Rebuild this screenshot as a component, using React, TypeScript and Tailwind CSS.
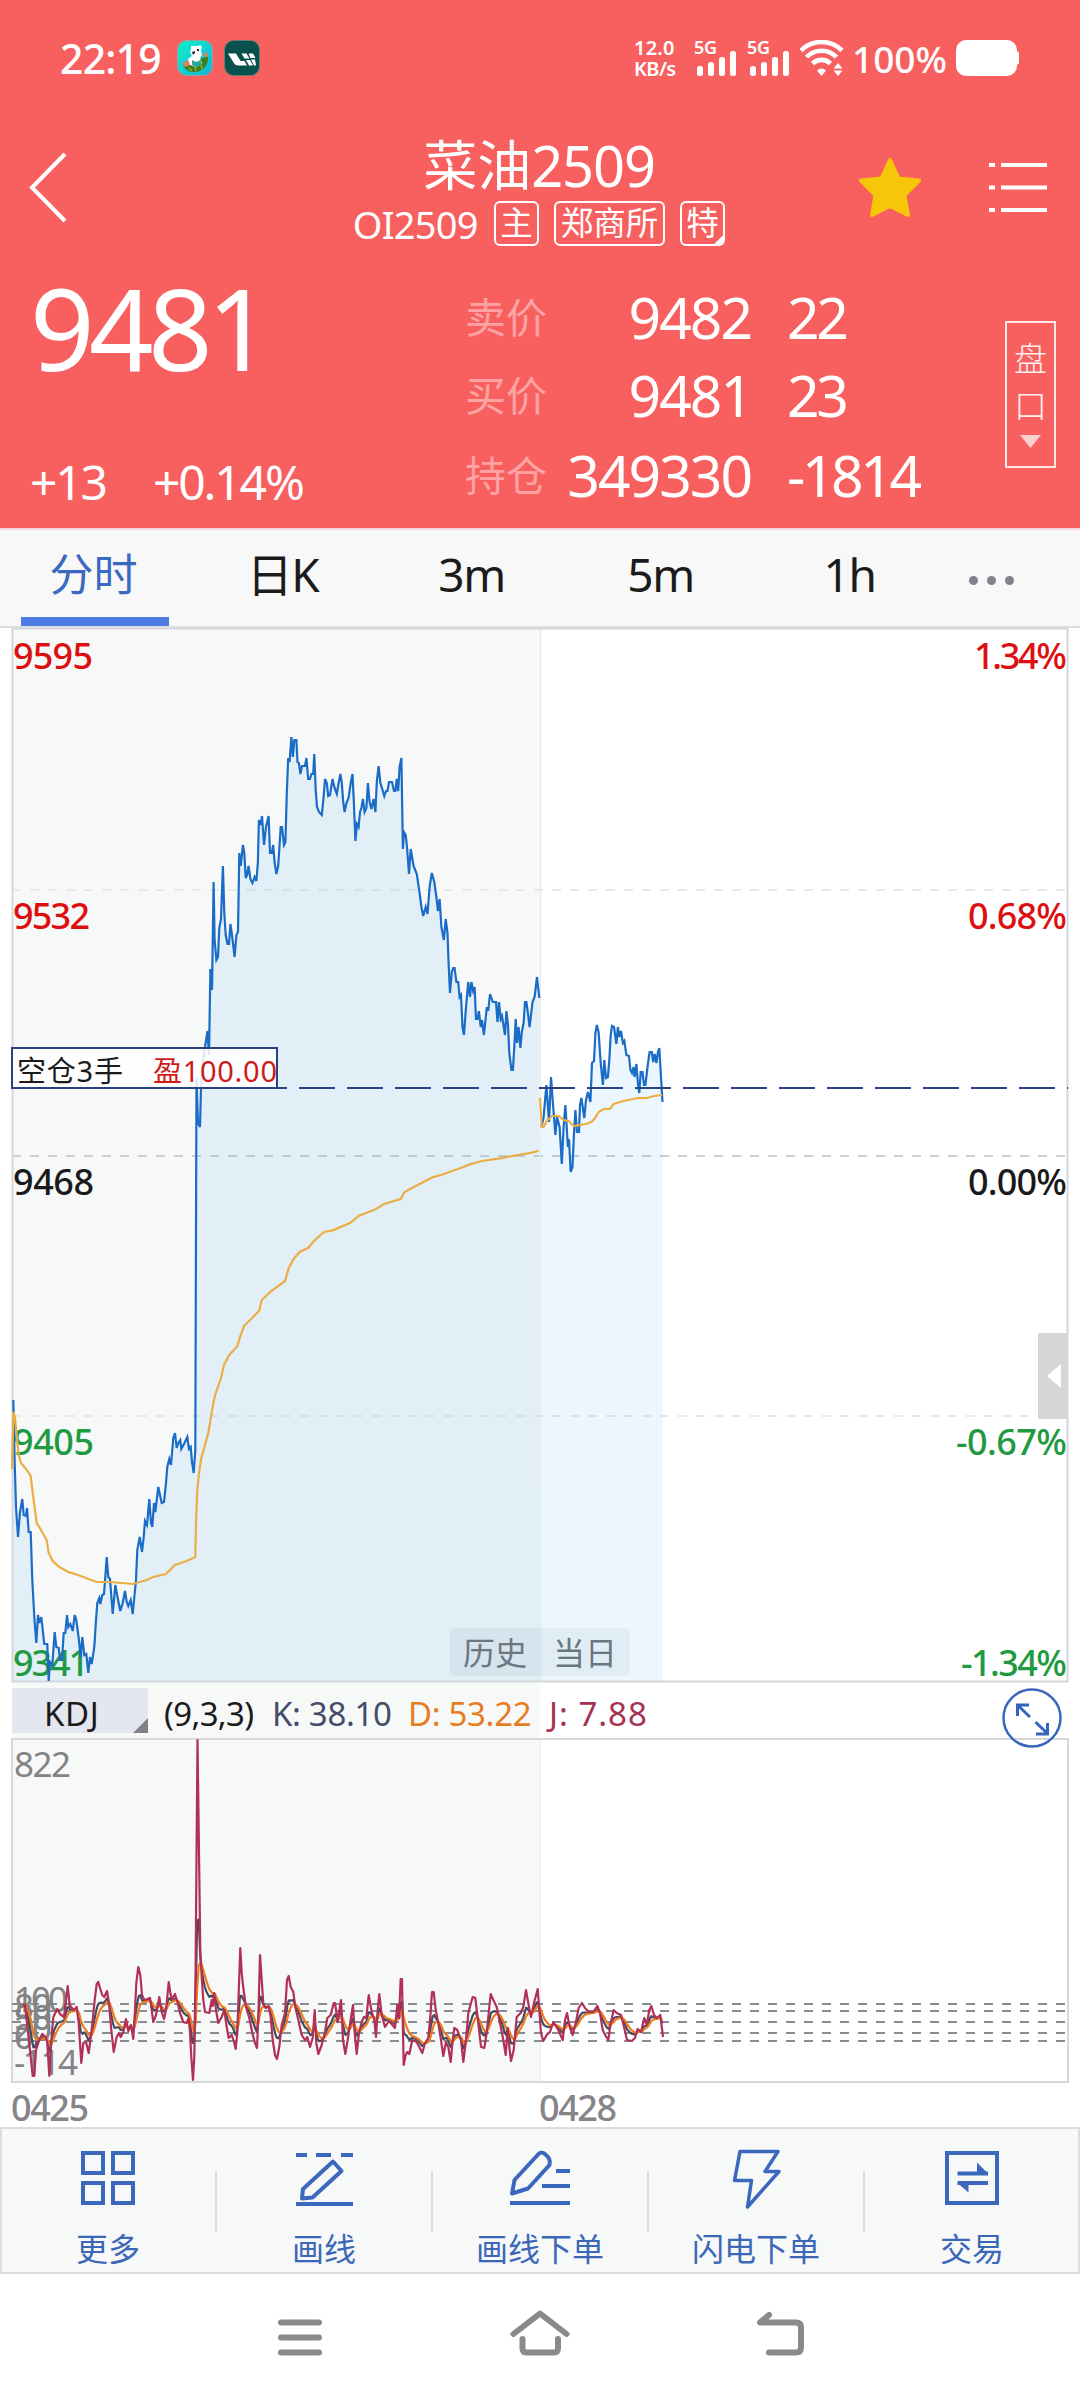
import React from "react";

const HISTORY_PRICE =
  "13.3,1400 14.7,1463 16,1507 18,1537 20,1512 22.3,1499 23.7,1515 26,1516 27,1508 28.7,1532 30.7,1532 32.3,1580 34.3,1617 36.3,1643 38,1615 39.3,1623 41.3,1617 44.3,1644 47.3,1644 48.7,1681 50,1662 52.3,1665 54.7,1632 56.3,1647 58.7,1648 60,1660 62,1660 63.7,1633 65.3,1633 67,1615 68.3,1627 70.3,1624 72.7,1631 74.7,1615 76.3,1620 78.7,1638 80.7,1657 82.3,1637 84.3,1655 86.3,1654 88.3,1673 90,1657 91.7,1664 94.3,1647 96,1620 97.3,1603 99.3,1598 100.3,1604 102.3,1595 104,1594 105.3,1577 106.7,1557 108.3,1577 110,1579 112.7,1614 115.3,1585 117.7,1598 120.3,1611 122.7,1603 125,1591 126.7,1602 128.3,1606 130.7,1600 132.7,1614 134.7,1593 136,1580 137.3,1550 139.7,1537 142,1552 143.7,1537 145,1521 147,1525 149.3,1499 151,1523 152.3,1527 154,1503 155.3,1512 158.3,1487 161.7,1503 164,1502 166,1483 167.3,1467 169.3,1459 171,1465 173.3,1438 175,1433 176.7,1448 178.3,1443 180.3,1440 181.3,1449 184,1444 187.3,1437 189,1449 190.7,1447 192,1462 193.7,1473 195.3,1450 196.5,1077 198,1123 200,1127 201,1088 203,1060 207.5,1031 209,1055 210.4,969 212,990 213.6,882 214.6,940 216.4,960 218,957 219.3,928 221,919 222.9,866 224.3,913 225.7,935 227.5,944 229,944 230.4,924 232,935 234.6,957 236.4,935 238,932 239.3,853 240.7,866 242.9,845 244.3,853 245.7,878 247,875 248.6,866 250.4,879 252.5,883 254.6,877 256.4,881 257.9,862 258.9,820 260.7,825 262,816 264,845 266,827 268.6,816 270,853 271.8,853 273.2,845 274.6,862 276.4,874 278.2,866 280.7,827 282,827 284,845 285.4,842 286.8,793 288.2,758 289.6,762 291.4,737 292.9,757 294.3,740 296.4,740 297.5,762 298.9,763 300.4,774 302,766 305,766 306.4,758 308.2,779 310,779 311.4,774 313.2,774 314.3,754 315.7,790 317,807 319,812 321.8,815 323.6,797 325,779 326.8,783 328.2,796 330,795 332.5,779 334.6,788 336.8,794 338.6,783 340.4,774 341.8,783 343.2,802 344.6,812 346.4,803 348.6,798 350.7,783 352.5,774 353.9,803 355.4,841 357,824 358.6,827 360,812 361.4,808 362.9,799 364.6,812 366.4,808 367.9,783 369.6,802 371.4,809 373.6,799 375.4,812 376.8,782 378.6,766 380.4,783 382,788 384.3,796 386,791 387.5,791 389,782 392,782 394,791 395.4,791 396.8,779 398.2,791 399.6,767 401.4,758 402.9,849 404,832 405.7,835 407,847 409,874 410.7,849 413.6,866 416.8,874 419.6,893 421.4,907 423.2,916 425.7,907 427.5,914 429.6,887 431.8,873 434.3,882 436.4,897 437.9,911 439.6,899 441.4,927 443.9,940 445.7,919 447.5,933 448.6,963 450,993 451.8,972 453.2,968 454.6,968 456.4,982 458.2,982 459.6,997 461,995 462.5,1027 464,1035 466,1007 468.2,982 470,997 471.4,982 473.2,991 474.6,987 476,1019 477.5,1019 478.9,1011 480.7,1027 482,1020 483.9,1035 485.7,1018 486.8,1007 488.2,1011 490,994 492.9,1002 496,1002 497.5,1022 499,1002 500.7,1019 502,1016 505,1035 506.4,1011 508,1025 509.3,1053 511.4,1070 512.9,1070 514.3,1047 515.7,1019 517,1043 518.6,1027 520.4,1048 521.8,1032 523.6,1023 525,1002 526.4,1002 527.9,1013 529.6,1027 532.5,1002 534.6,997 537,977 539.3,998";

const TODAY_PRICE =
  "541.4,1127 543.5,1118 546.4,1085 549,1122 551,1077 552.9,1103 555.4,1135 557,1117 559.6,1127 561.8,1164 563.6,1127 565.4,1105 567.9,1147 569,1139 570.7,1172 572.5,1167 574,1133 575.4,1110 577,1132 579,1132 580,1105 581.4,1098 584.3,1118 586,1100 587.9,1092 590.4,1102 592,1063 594,1061 595.4,1033 596.8,1025 598.6,1032 600.7,1063 602.9,1085 604.3,1060 606,1078 607.9,1077 609.3,1060 610.7,1035 612,1026 614,1027 616.4,1044 617.9,1027 619.3,1037 621,1031 622.9,1043 624.3,1041 626.4,1055 629,1056 630.4,1070 632,1073 633.6,1067 634.6,1077 636.4,1064 637.9,1083 639.3,1093 640.7,1072 642.5,1072 644,1085 645.4,1085 647.5,1067 649.6,1052 651.8,1052 653.2,1062 654.6,1054 656.4,1063 657.9,1052 659.3,1048 661,1077 662.5,1102";

const HISTORY_AVG =
  "12,1469 13.3,1412 15,1417 16.7,1437 18.7,1455 21,1463 26,1469 30.7,1476 32.7,1493 35,1510 36.7,1523 41,1530 46.7,1540 48.7,1553 52.7,1561 59.3,1567 68.3,1572 78.3,1575 88.3,1579 96.7,1582 110,1582 133,1584 146.7,1580 153,1577 165.7,1574 175,1565 186.7,1561 195.3,1557 196,1523 197.3,1490 199,1473 201.3,1458 208.3,1433 213.3,1403 215.4,1394 220.7,1379 224,1365 229.3,1355 237.5,1346 240,1337 244,1326 259,1311 261.8,1300 270.7,1291.5 285,1281 288.6,1268.5 293.6,1259 300,1251.7 308,1248 314,1241 324,1232 332,1230.6 350,1223 359,1215.7 375,1209.6 384,1204 400.7,1199 404.6,1192 419.6,1184 432,1177.5 441,1175 460.7,1168 469.6,1164.4 482,1161 500,1158.3 517.9,1155 532,1152.6 538.6,1150.7";

const TODAY_AVG =
  "540,1098 541.8,1127 543.6,1127 546.8,1121 552,1116 559,1116 563.6,1120 568.6,1121 573.6,1126 586,1124 591.4,1122 595,1118 598.6,1112 604,1109 610,1109 613.6,1104 623.6,1101 638,1098 647,1098 654,1096 662,1095";

const J_LINE =
  "22.7,2004 25,2005 27.3,2027 30,2050 32.7,2076 34.3,2076 36,2050 39.3,2040 42.3,2034 45.7,2037 47.3,2043 49.3,2076 51.3,2040 53.3,2017 57.3,2009 60,2014 64,2017 65.7,2003 67.7,1986 69.7,2005 73.3,2010 76.7,2007 78.7,2023 80,2043 81.3,2063 83.3,2043 86,2042 88.7,2053 90.7,2038 92.7,2020 94.7,2000 96.7,1984 98.3,1982 100,1988 102.3,1995 104.3,1997 107,1991 109,2003 111,2027 113.7,2052 116.7,2037 119,2033 120.7,2037 123.3,2032 126,2019 128.3,2031 131,2025 133.3,2039 135,2010 136.3,1983 138.3,1967 140.3,1975 142,1995 144.3,2000 147.3,1999 150,1998 151.7,2010 153.3,2022 156,2015 159.3,1997 161.7,2012 164,2019 166,2010 167.3,1997 168.7,1982 170.7,1995 172.3,1999 175,1994 177.7,2003 180,2013 183.3,2022 186.7,2023 188.7,2018 190,2033 191.3,2057 193,2080 194.3,2057 195.6,1967 197.5,1740 200.3,1950 201.7,1977 203.3,2000 205,2012 209.3,2013 211.7,2000 212.7,2006 214.3,1993 216,2010 218.3,2023 221.7,2017 224.3,2010 226.7,2027 228.7,2038 231.7,2035 234,2042 235.7,2049 237.3,2033 238.7,1993 240.3,1948 241.7,1973 243.3,1988 246,2007 249.3,2018 252.3,2033 255,2043 257,2048 258.3,2017 260,1955 261.7,1980 263.3,2003 265.7,2008 268.7,2006 270.7,2017 272.7,2040 275,2055 277,2059 279.3,2047 281.7,2025 285,2013 287,1980 288.7,1976 290.7,1987 293.3,1992 295.3,2007 298.3,2020 301.7,2035 305,2040 307.3,2037 310,2047 312.7,2038 314.7,2010 316.3,2043 318.3,2054 321.7,2045 325,2032 327.3,2018 330.7,2015 333.7,2003 335,2003 337.7,2022 341,2000 343,2040 345.3,2054 347.7,2040 350.3,2022 353,2005 354.7,2033 356.7,2054 359,2033 361.7,2022 364,2017 366.3,2018 368.7,1995 371.7,2012 374.3,2020 376,2037 377.7,2010 379.3,1994 381.7,2015 385,2027 389,2021 395,2028 397.3,2005 399,2018 400.7,1979 402,1979 403,2033 403.7,2065 405.7,2055 407.3,2052 409.3,2054 412.3,2040 416.7,2042 422.3,2053 425,2043 428.3,2038 430.3,2017 432,1992 433.7,1992 435.7,2010 438.3,2023 441,2040 443.3,2056 446,2042 448.3,2047 450.7,2062 452.7,2040 454.3,2028 457.3,2030 461,2040 463.3,2062 465.7,2043 468.3,2013 471,2003 472.7,1997 475.3,1998 477.7,2018 481,2047 484.3,2048 486.7,2033 488.7,2013 490.7,1994 493.3,2000 496.7,2007 500,2023 503.3,2040 505.7,2055 507.7,2028 509.3,2047 511,2061 513.7,2050 516.7,2017 520.7,2013 523.3,2007 526,1990 528.3,2003 531,2017 534,2003 537.7,1989 539.3,2010 541,2033 543.3,2041 547.3,2034 550,2032 553.3,2022 558.3,2030 562.7,2040 565,2020 567,2013 570,2028 572.7,2035 575.7,2023 578.7,2008 582,2003 585,2008 589,2012 593.3,2012 597.3,2006 600,2013 602.7,2030 605.7,2036 608.3,2040 610.7,2023 613.7,2010 616.7,2013 621,2015 624.3,2028 627,2040 631.7,2041 635,2038 637.7,2029 641,2032 644.3,2018 646.7,2025 649.3,2010 651.3,2006 654,2015 656.7,2018 660.3,2015 663,2037";

// J = 3K - 2D and D = (2D' + K) / 3, so both slow lines follow from J alone.
const BAR = 1.53;
const deriveKD = (line: string) => {
  const pts = line.split(" ").map((p) => p.split(",").map(Number));
  const k: string[] = [];
  const d: string[] = [];
  let prev = pts[0][1];
  let i = 0;
  for (let x = pts[0][0]; x <= pts[pts.length - 1][0]; x += BAR) {
    while (i < pts.length - 2 && pts[i + 1][0] < x) i++;
    const [x0, y0] = pts[i];
    const [x1, y1] = pts[i + 1];
    const j = y0 + ((y1 - y0) * (x - x0)) / (x1 - x0);
    prev = (6 * prev + j) / 7;
    d.push(`${x.toFixed(1)},${prev.toFixed(1)}`);
    k.push(`${x.toFixed(1)},${((j + 2 * prev) / 3).toFixed(1)}`);
  }
  return { k: k.join(" "), d: d.join(" ") };
};
const { k: K_LINE, d: D_LINE } = deriveKD(J_LINE);

const LEVELS = [
  { label: "100", y: 2004, w: 54 },
  { label: "80", y: 2011, w: 38 },
  { label: "50", y: 2022, w: 38 },
  { label: "20", y: 2033, w: 38 },
  { label: "0", y: 2041, w: 19 },
];

const PRICE_LABELS = [
  { price: "9595", pct: "1.34%", y: 669, pw: 80, w: 93, color: "#dc1010" },
  { price: "9532", pct: "0.68%", y: 929, pw: 77, w: 99, color: "#dc1010" },
  { price: "9468", pct: "0.00%", y: 1195, pw: 81, w: 99, color: "#1a1a1a" },
  { price: "9405", pct: "-0.67%", y: 1455, pw: 81, w: 111, color: "#1f9a41" },
  { price: "9341", pct: "-1.34%", y: 1676, pw: 76, w: 106, color: "#1f9a41" },
];

const Signal = () => (
  <div className="relative h-9 w-[46px]">
    <span className="absolute -top-[2px] left-0 text-[18px] leading-[18px] font-semibold tracking-[-0.02em]">
      5G
    </span>
    <svg className="absolute inset-0" viewBox="0 0 46 36" fill="#fff">
      <rect x="3" y="26" width="6" height="10" rx="2.5" />
      <rect x="14" y="22" width="6" height="14" rx="2.5" />
      <rect x="25" y="17" width="6" height="19" rx="2.5" />
      <rect x="36" y="11" width="6" height="25" rx="2.5" />
    </svg>
  </div>
);

const StatusBar = () => (
  <div className="flex h-[116px] items-center pr-[60px] pl-[60px]">
    <span className="w-[117px] text-[41px] leading-none font-medium tracking-[-0.02em]">
      22:19
    </span>
    <svg className="h-9 w-9" viewBox="0 0 36 36">
      <defs>
        <linearGradient id="bear" x1="0" y1="0" x2="1" y2="1">
          <stop offset="0" stopColor="#0ff0c8" />
          <stop offset="1" stopColor="#12b4dc" />
        </linearGradient>
      </defs>
      <rect x="0.5" y="0.5" width="35" height="35" rx="9" fill="url(#bear)" stroke="#a49e98" />
      <path d="M6 25l25-9c1 8-4 15-12 16-6 1-11-2-13-7z" fill="#3f7f22" />
      <path d="M5 23l6-3 3 5-6 2zM25 16l5-5 1 6z" fill="#d9826a" />
      <path d="M14 9l0-3 3 0 4 0 2-1 2 2-1 3 1 5-2 3 2 5-6 4-6-2-2-6 4-3-2-4z" fill="#fff" />
      <path d="M15 20l4 2 5-2 0 5-5 2-4-2z" fill="#25a99a" />
      <path d="M15 12l3-1 0 2-2 2zM20 9l2 0 0 2-2 0z" fill="#222" />
      <path d="M12 28l3 3M18 27l1 4M24 25l1 4" stroke="#86b53a" strokeWidth="1.5" />
    </svg>
    <svg className="ml-[11px] h-9 w-9" viewBox="0 0 36 36">
      <rect x="0.5" y="0.5" width="35" height="35" rx="9" fill="#08504c" stroke="#5e7f78" />
      <path d="M4 13.500h8l4.500 7.500h4l2.500 4.500H14.500q-3.500 0-5-3z" fill="#fff" />
      <path d="M17.500 13.500h5l3 5h-5zM24.500 13.500h4.500l2.500 4.500h-5zM22 20h4l3 5.500h-4zM27 19.500h4l1 6h-2z" fill="#fff" />
    </svg>
    <div className="ml-auto flex h-9 items-center">
      <div className="flex w-[60px] flex-col text-[20px] leading-[21px] font-semibold">
        <span className="tracking-[0.01em]">12.0</span>
        <span className="tracking-[-0.03em]">KB/s</span>
      </div>
      <Signal />
      <div className="w-[7px]" />
      <Signal />
      <svg className="ml-[7px] h-9 w-[44px]" viewBox="0 0 44 36" fill="none" stroke="#fff" strokeWidth="4.6">
        <path d="M1 10.500a29 29 0 0 1 41 0" />
        <path d="M6.500 17a21 21 0 0 1 30 0" />
        <path d="M12.500 23.500a13 13 0 0 1 18 0" />
        <path d="M21.500 36l-4.500-5.500q4.500-4 9 0z" fill="#fff" stroke="none" />
        <path d="M38 23l4.500 5.500h-9zM38 36l-4.500-5.500h9z" fill="#fff" stroke="none" />
      </svg>
      <span className="ml-2 w-[98px] text-[37px] leading-none font-medium">
        100%
      </span>
      <svg className="ml-1.5 h-9 w-[64px]" viewBox="0 0 64 36" fill="#fff">
        <rect x="0" y="0" width="61" height="36" rx="10" />
        <rect x="54" y="11" width="9" height="14" rx="3" />
      </svg>
    </div>
  </div>
);

const Tag = ({ children }: { children: React.ReactNode }) => (
  <span className="relative flex h-[45px] items-center justify-center overflow-hidden rounded-md border-2 border-white px-[4.5px] text-[32.5px] leading-none">
    {children}
  </span>
);

const TitleBar = () => (
  <div className="flex h-[140px] items-start">
    <svg className="mt-[34px] ml-[26px] h-[76px] w-[46px]" viewBox="0 0 46 76" fill="none" stroke="#fff" strokeWidth="4">
      <path d="M39 4L6 37.500L39 71" />
    </svg>
    <div className="ml-[181px] flex w-[572px] flex-col items-center">
      <div className="mt-[19px] flex h-[60px] items-center text-[54px] leading-none">
        <span>菜油</span>
        <span className="text-[56px] tracking-[-0.02em]">2509</span>
      </div>
      <div className="mt-[6px] flex h-[45px] items-center">
        <span className="mr-4 text-[38px] leading-none tracking-[-0.02em]">OI2509</span>
        <Tag>主</Tag>
        <span className="w-[15px]" />
        <Tag>郑商所</Tag>
        <span className="w-[15px]" />
        <Tag>
          特
          <i className="absolute right-0 bottom-0 h-[9px] w-[9px] bg-white [clip-path:polygon(100%_0,100%_100%,0_100%)]" />
        </Tag>
      </div>
    </div>
    <svg className="mt-[40px] ml-[31px] h-[64px] w-[68px]" viewBox="0 0 68 64">
      <path
        d="M34 4L42.500 22.500L63 24.500L48.500 39L52 59L34 50L16 59L19.500 39L5 24.500L25.500 22.500Z"
        fill="#f6c708"
        stroke="#f6c708"
        strokeWidth="4"
        strokeLinejoin="round"
      />
    </svg>
    <svg className="mt-[46px] ml-[65px] h-[52px] w-[58px]" viewBox="0 0 58 52" stroke="#fff" strokeWidth="4">
      <path d="M0 3h6M12 3h46M0 25.500h6M12 25.500h46M0 48h6M12 48h46" />
    </svg>
  </div>
);

const QUOTES = [
  { name: "卖价", value: "9482", extra: "22", row: "h-[77px]" },
  { name: "买价", value: "9481", extra: "23", row: "h-[78px]" },
  { name: "持仓", value: "349330", extra: "-1814", row: "h-[82px]" },
];

const Quote = () => (
  <div className="flex h-[272px]">
    <div className="w-[465px] pl-[30px]">
      <div className="mt-[16px] text-[113px] leading-[110px] tracking-[-0.05em]">9481</div>
      <div className="mt-[75px] flex text-[48px] leading-[50px] tracking-[-0.045em]">
        <span className="w-[123px]">+13</span>
        <span>+0.14%</span>
      </div>
    </div>
    <div className="w-[540px] pt-[23px]">
      {QUOTES.map((q) => (
        <div key={q.name} className={`flex items-center leading-none ${q.row}`}>
          <span className="w-[83px] text-[41px] text-[#fda3a3]">{q.name}</span>
          <span className="w-[203px] text-right text-[57px] tracking-[-0.035em]">{q.value}</span>
          <span className="ml-[36px] text-[57px] tracking-[-0.06em]">{q.extra}</span>
        </div>
      ))}
    </div>
    <div className="mt-[65px] flex h-[147px] w-[51px] flex-col items-center border-2 border-white/85 pt-[12px] text-[33px] leading-[47px] font-light text-white/90">
      <span>盘</span>
      <span>口</span>
      <i className="mt-[6px] h-[13px] w-[21px] bg-white/70 [clip-path:polygon(0_0,100%_0,50%_100%)]" />
    </div>
  </div>
);

const Tabs = () => (
  <div className="flex h-[100px] border-t-2 border-b-2 border-t-[#f3d9d9] border-b-[#dcdfe2] bg-[#f8f8f8] text-[46px] leading-none text-[#1b1b1b]">
    {["分时", "日K", "3m", "5m", "1h"].map((tab, i) => (
      <div key={tab} className="relative flex w-[189px] justify-center pt-[21px] pr-[2px]">
        <span
          className={
            i === 0
              ? "pt-px text-[44px] text-[#3b68c0]"
              : "tracking-[-0.03em]"
          }
        >
          {tab}
        </span>
        {i === 0 && (
          <i className="absolute bottom-0 left-[21px] h-[9px] w-[148px] bg-[#4d7ce2]" />
        )}
      </div>
    ))}
    <div className="flex w-[92px] justify-center gap-[9px] pt-[46px]">
      <i className="h-[9px] w-[9px] rounded-full bg-[#82828a]" />
      <i className="h-[9px] w-[9px] rounded-full bg-[#82828a]" />
      <i className="h-[9px] w-[9px] rounded-full bg-[#82828a]" />
    </div>
  </div>
);

const PriceChart = () => (
  <svg className="block h-[1055px] w-[1080px]" viewBox="0 628 1080 1055" fill="none">
    <rect x="12" y="628" width="528" height="1055" fill="#f7f9f8" />
    <path d="M12 890H1068M12 1416H1068" stroke="#e7e9ea" strokeWidth="2" strokeDasharray="9 9" />
    <path d="M12 1156H1068" stroke="#cdd0d1" strokeWidth="2" strokeDasharray="9 9" />
    <polygon points={`12,1682 ${HISTORY_PRICE} 540,1682`} fill="#1e9af5" fillOpacity="0.095" />
    <polygon points={`541,1682 ${TODAY_PRICE} 662.5,1682`} fill="#1e9ef0" fillOpacity="0.09" />
    <path d="M540.500 628V1682" stroke="#dfe9ee" />
    <rect x="12.500" y="628.500" width="1055" height="1053" stroke="#d3d6da" strokeWidth="2" />

    <g fontSize="36" fontWeight="500">
      {PRICE_LABELS.map((l) => (
        <g key={l.price} fill={l.color}>
          <text x="13" y={l.y} textLength={l.pw}>
            {l.price}
          </text>
          <text x={1067 - l.w} y={l.y} textLength={l.w}>
            {l.pct}
          </text>
        </g>
      ))}
    </g>

    <polyline points={HISTORY_PRICE} stroke="#1a6cc6" strokeWidth="2.2" />
    <polyline points={TODAY_PRICE} stroke="#1a6cc6" strokeWidth="2.2" />
    <polyline points={HISTORY_AVG} stroke="#eaae45" strokeWidth="2.2" />
    <polyline points={TODAY_AVG} stroke="#eaae45" strokeWidth="2.2" />

    <path d="M11 1088H1068" stroke="#2a437f" strokeWidth="2" strokeDasharray="36 12" />
    <rect x="12" y="1048" width="265" height="40" fill="#fff" fillOpacity="0.85" stroke="#2a437f" strokeWidth="2" />
    <g fontSize="29">
      <text x="17" y="1082" fill="#1b1b1b" textLength="106">
        空仓3手
      </text>
      <text x="153" y="1082" fill="#d01a1a" textLength="124">
        盈100.00
      </text>
    </g>

    <path d="M540 1628H455q-5 0-5 5V1671q0 5 5 5H540z" fill="#9fb0bd" fillOpacity="0.16" />
    <path d="M540 1628H625q5 0 5 5V1671q0 5-5 5H540z" fill="#9fb0bd" fillOpacity="0.13" />
    <g fontSize="32" fill="#6a7780">
      <text x="463" y="1665">
        历史
      </text>
      <text x="553" y="1665">
        当日
      </text>
    </g>

    <rect x="1038" y="1333" width="30" height="86" fill="#d6d6d6" />
    <path d="M1047 1376L1061 1364V1388Z" fill="#fff" />
  </svg>
);

const IndicatorBar = () => (
  <div className="relative flex h-[55px] pl-3 text-[33px] leading-[51px] tracking-[-0.01em]">
    <div className="flex h-full w-[528px] bg-[#f7f9f8] pt-[5px]">
      <div className="relative h-[45px] w-[136px] bg-[#e4e6f0] pl-[32px] tracking-[0.02em] text-[#1b1b1b]">
        KDJ
        <i className="absolute right-0 bottom-0 h-[15px] w-[15px] bg-[#808086] [clip-path:polygon(100%_0,100%_100%,0_100%)]" />
      </div>
      <span className="ml-4 w-[108px] tracking-[-0.02em] text-[#1b1b1b]">(9,3,3)</span>
      <span className="w-[136px] whitespace-nowrap text-[#434c68]">K: 38.10</span>
      <span className="whitespace-nowrap text-[#e87c1f]">D: 53.22</span>
    </div>
    <span className="pt-[5px] pl-[9px] tracking-[0.03em] text-[#a63152]">J: 7.88</span>
    <button className="absolute top-[5px] left-[1002px] z-10 h-[60px] w-[60px]">
      <svg viewBox="0 0 60 60" fill="none" stroke="#3b67ba">
        <circle cx="30" cy="30" r="28.500" strokeWidth="2.500" />
        <path
          d="M27 17H15.500V28M15.500 17L28 29M33.500 34L46 46M34 46H45.500V35"
          stroke="#3464c0"
          strokeWidth="3"
        />
      </svg>
    </button>
  </div>
);

const KdjChart = () => (
  <svg className="block h-[346px] w-[1080px]" viewBox="0 1738 1080 346" fill="none">
    <rect x="12" y="1738" width="528" height="345" fill="#f7f9f8" />
    <path d="M540.500 1738V2082" stroke="#eceeee" />
    <rect x="12" y="1739" width="1056" height="343" stroke="#d6d8dc" strokeWidth="2" />
    {LEVELS.map((l) => (
      <line
        key={l.label}
        x1="12"
        x2="1068"
        y1={l.y}
        y2={l.y}
        stroke="#888a96"
        strokeWidth="2"
        strokeDasharray="9 9"
      />
    ))}
    <g fontSize="35" fill="#838387">
      <text x="14" y="1777" textLength="57">
        822
      </text>
      {LEVELS.map((l) => (
        <text key={l.label} x="14" y={l.y + 8} textLength={l.w}>
          {l.label}
        </text>
      ))}
      <text x="14" y="2075" textLength="64">
        -114
      </text>
    </g>
    <g strokeWidth="2.2" strokeLinejoin="round">
      <polyline points={K_LINE} stroke="#434a63" />
      <polyline points={D_LINE} stroke="#ee7c1b" />
      <polyline points={J_LINE} stroke="#b22f56" />
    </g>
  </svg>
);

const Dates = () => (
  <div className="flex h-[43px] pt-[8px] pl-[11px] text-[36px] leading-[32px] font-medium tracking-[-0.04em] text-[#848489]">
    <span className="w-[528px]">0425</span>
    <span>0428</span>
  </div>
);

const ACTIONS = [
  {
    name: "更多",
    icon: <path d="M7 7h20v20H7zM37 7h20v20H37zM7 37h20v20H7zM37 37h20v20H37z" />,
  },
  {
    name: "画线",
    icon: (
      <>
        <path d="M4 9h11M24 9h15M49 9h12M4 58h57" />
        <path d="M11 43L41 15.500L49.500 25L20.500 51.500L10 52.500Z" strokeLinejoin="round" />
      </>
    ),
  },
  {
    name: "画线下单",
    icon: (
      <>
        <path d="M4 47.500L6.500 34L31 7.500Q34 5 38 9Q43 13 41.500 19L20 42.500Z" strokeLinejoin="round" />
        <path d="M48 25h14M34 40h28M2 57h60" />
      </>
    ),
  },
  {
    name: "闪电下单",
    icon: (
      <path d="M16 5.500H54L41 25.500H55L23.500 61L27.500 34.500H10.500Z" strokeWidth="3.500" strokeLinejoin="round" />
    ),
  },
  {
    name: "交易",
    icon: (
      <>
        <rect x="7" y="7" width="50" height="50" />
        <path d="M17.500 27.500H48M17.500 37H48" />
        <path d="M37 16.500L48 27.500H37zM28.500 46.500L17.500 37H28.500z" fill="#3b67bd" stroke="none" />
      </>
    ),
  },
];

const Toolbar = () => (
  <div className="flex h-[147px] items-center bg-[#f7f8f8] shadow-[inset_0_0_0_2px_#dcdde0]">
    {ACTIONS.map((a, i) => (
      <React.Fragment key={a.name}>
        {i > 0 && <div className="-mx-px h-[60px] w-[2px] bg-[#dcdcdf]" />}
        <div className="flex h-full flex-1 flex-col items-center pt-[19px]">
          <svg className="h-[64px] w-[64px]" viewBox="0 0 64 64" fill="none" stroke="#3b67bd" strokeWidth="4">
            {a.icon}
          </svg>
          <span className="mt-[19px] text-[32px] leading-[40px] text-[#3b67b8]">
            {a.name}
          </span>
        </div>
      </React.Fragment>
    ))}
  </div>
);

const NavBar = () => (
  <div className="flex h-[126px] items-start justify-center pt-[31px]">
    <svg className="h-[56px] w-[530px]" viewBox="-3 0 530 56" fill="none" stroke="#8a8a8a" strokeWidth="6" strokeLinecap="round" strokeLinejoin="round">
      <path d="M3 17.500H41M3 32.500H41M3 47.500H41" />
      <path d="M235.500 29L262 8.500L288.500 29M244.500 34V43q0 4.500 4 4.500H276q4 0 4-4.500V34" />
      <path d="M491 10L482 17.500H518q5 0 5 5V42.500q0 5-5 5H491" />
    </svg>
  </div>
);

const App = () => {
  return (
    <div className="h-[2400px] w-[1080px] overflow-hidden bg-white font-['Noto_Sans','Noto_Sans_CJK_SC',sans-serif]">
      <header className="h-[528px] bg-[#f8605f] text-white">
        <StatusBar />
        <TitleBar />
        <Quote />
      </header>
      <Tabs />
      <main>
        <PriceChart />
        <IndicatorBar />
        <KdjChart />
        <Dates />
      </main>
      <Toolbar />
      <NavBar />
    </div>
  );
};

export default App;
